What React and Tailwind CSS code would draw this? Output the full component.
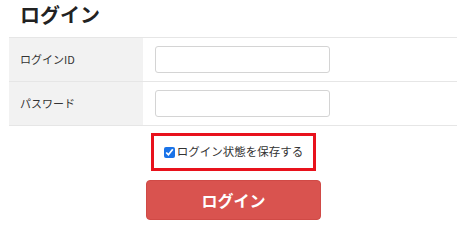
export default function App() {
  const font = { fontFamily: '"Noto Sans CJK JP", "Noto Sans", sans-serif' };
  return (
    <div className="w-[475px] h-[229px] bg-white text-[#333]" style={font}>
      <div className="pl-[9px] w-[457px]">
        <h1 className="pl-[11px] pt-[1px] h-[37px] text-[20px] font-bold leading-[28px] text-[#222]">ログイン</h1>
        <div className="border-t border-[#e6e6e6]">
          <div className="flex h-[44px] border-b border-[#e6e6e6]">
            <div className="w-[134px] bg-[#f2f2f2] flex items-center pl-[11px] text-[11px]">ログインID</div>
            <div className="flex items-center pl-[12px]">
              <input className="w-[175px] h-[27px] rounded-[3px] border border-[#d4d4d4] bg-white" />
            </div>
          </div>
          <div className="flex h-[44px] border-b border-[#e6e6e6]">
            <div className="w-[134px] bg-[#f2f2f2] flex items-center pl-[11px] text-[11px]">パスワード</div>
            <div className="flex items-center pl-[12px]">
              <input type="password" className="w-[175px] h-[27px] rounded-[3px] border border-[#d4d4d4] bg-white" />
            </div>
          </div>
        </div>
      </div>
      <div className="flex flex-col items-center w-[467px]">
        <div className="mt-[7px] w-[165px] h-[38px] border-[3px] border-[#e8121c] flex items-center justify-center">
          <label className="flex items-center gap-[2px] text-[11.5px] text-[#333]">
            <input type="checkbox" defaultChecked className="w-[11px] h-[11px] accent-[#1a73e8]" />
            <span>ログイン状態を保存する</span>
          </label>
        </div>
        <button className="mt-[9px] w-[175px] h-[40px] rounded-[4px] bg-[#d9534f] border border-[#d04a46] text-white text-[16px] font-bold">ログイン</button>
      </div>
    </div>
  );
}
